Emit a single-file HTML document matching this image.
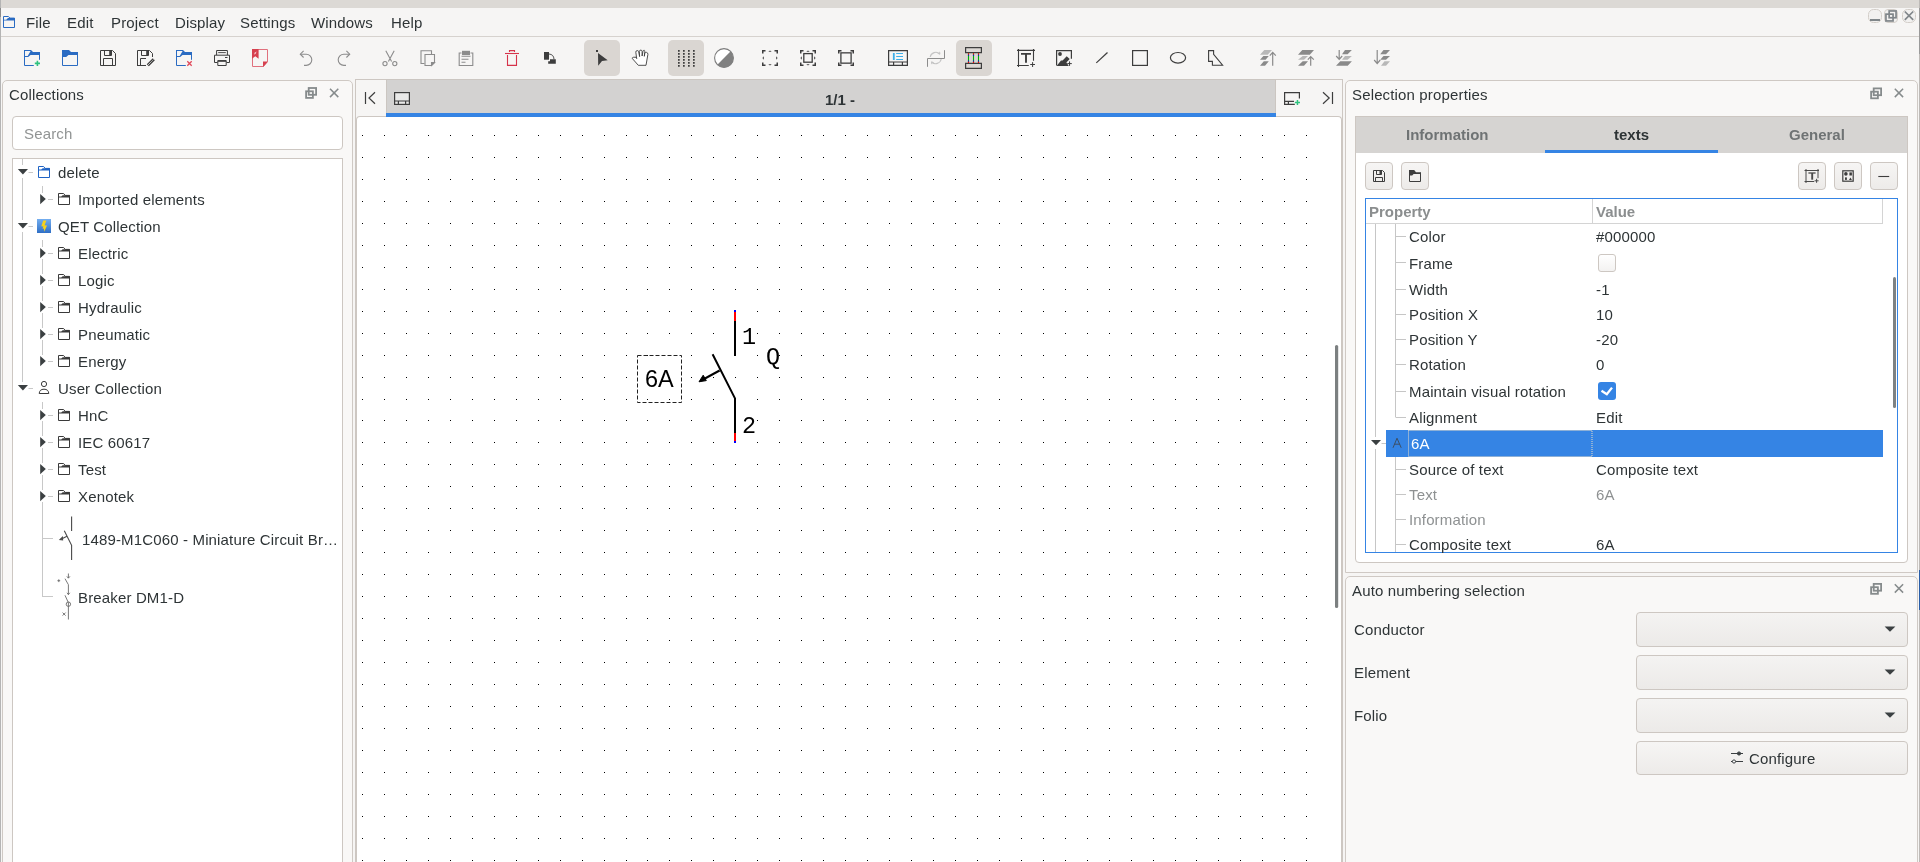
<!DOCTYPE html>
<html><head><meta charset="utf-8">
<style>
*{box-sizing:border-box;margin:0;padding:0}
html,body{width:1920px;height:862px;overflow:hidden}
body{position:relative;background:#f6f5f4;font-family:"Liberation Sans",sans-serif;font-size:15px;color:#2e3436}
.a{position:absolute}
.t{position:absolute;line-height:17px;white-space:nowrap;will-change:transform;letter-spacing:0.15px}
.b{font-weight:bold;letter-spacing:0}
svg{position:absolute;overflow:visible}
.dock{position:absolute;background:#f9f8f7;border:1px solid #cfc9c4;border-radius:5px 5px 0 0}
.btn{position:absolute;border:1px solid #cdc7c2;border-radius:4px;background:linear-gradient(#f6f5f4,#edebe9)}
.combo{position:absolute;border:1px solid #cdc7c2;border-radius:4px;background:linear-gradient(#f4f3f2,#eceae8)}
.gl{position:absolute;background:#c4c4c4}
.dis{color:#8e9192}
</style></head><body>
<!-- top strip -->
<div class="a" style="left:0;top:0;width:1920px;height:8px;background:#dcd9d5"></div>
<div class="a" style="left:0;top:36px;width:1920px;height:1px;background:#d6d2ce"></div>
<div class="a" style="left:0;top:0;width:1px;height:862px;background:#b4b4b4"></div><div class="a" style="left:0;top:8px;width:1px;height:9px;background:#8a8a8a"></div>
<div class="a" style="left:1919px;top:0;width:1px;height:862px;background:#bdbab7"></div><div class="a" style="left:1919px;top:8px;width:1px;height:46px;background:#9a9a9a"></div><div class="a" style="left:1919px;top:570px;width:1px;height:40px;background:#2a5ea8"></div>

<!-- MENU -->
<div id="menu">
<div class="t" style="left:26px;top:14px">File</div>
<div class="t" style="left:67px;top:14px">Edit</div>
<div class="t" style="left:111px;top:14px">Project</div>
<div class="t" style="left:175px;top:14px">Display</div>
<div class="t" style="left:240px;top:14px">Settings</div>
<div class="t" style="left:311px;top:14px">Windows</div>
<div class="t" style="left:391px;top:14px">Help</div>
</div>

<!-- TOOLBAR -->
<div id="toolbar">
<div class="a" style="left:584px;top:40px;width:36px;height:36px;border-radius:5px;background:#dad6d2"></div>
<div class="a" style="left:668px;top:40px;width:36px;height:36px;border-radius:5px;background:#dad6d2"></div>
<div class="a" style="left:956px;top:40px;width:36px;height:36px;border-radius:5px;background:#dad6d2"></div>
<svg style="left:0;top:0" width="1920" height="80" viewBox="0 0 1920 80">
<!-- menu app icon -->
<g transform="translate(3,16)" fill="none" stroke="#2a6bc2"><path d="M0.5 11.5V0.5H5.3L7 2.1H11.5V11.5Z"/><path d="M0 3.7H3.2L5 2.1H12V4.4H0Z" fill="#2a6bc2" stroke="none"/></g>
<!-- 1 new -->
<g transform="translate(24,50)">
<path fill="#2a6bc2" fill-rule="evenodd" d="M0 0H7L9 2H16V5.1H6.5L4.2 7H0Z M1 1V6H3.7L6.6 1Z"/>
<path fill="none" stroke="#2a6bc2" d="M0.5 6V15.5H9.8M15.5 5V9.8"/>
<path fill="none" stroke="#2ec27e" stroke-width="1.6" d="M10.8 13.4H16M13.4 10.8V16"/>
</g>
<!-- 2 open -->
<g transform="translate(62,50)">
<path fill="#2a6bc2" d="M0 0H7L9 2H16V5.1H6.5L4.2 7H0Z"/>
<path fill="none" stroke="#2a6bc2" d="M0.5 6V15.5H15.5V5"/>
</g>
<!-- 3 save -->
<g transform="translate(100,50)" fill="none" stroke="#3d3d3d">
<path d="M0.5 0.5H12.5L15.5 3.5V15.5H0.5Z"/>
<path d="M4.5 0.5V5.5H11.5V0.5"/>
<path d="M3.5 15.5V8.5H12.5V15.5"/>
<rect x="9.2" y="1" width="2" height="4.3" fill="#3d3d3d" stroke="none"/>
</g>
<!-- 4 save as -->
<g transform="translate(137,50)" fill="none" stroke="#3d3d3d">
<path d="M0.5 16V0.5H12.5L15.5 3.5V7M0 15.5H9"/>
<path d="M4.5 0.5V5.5H11.5V0.5"/>
<path d="M3.5 16V8.5H9"/>
<rect x="9.2" y="1" width="2" height="4.3" fill="#3d3d3d" stroke="none"/>
<path d="M10.8 15.2L16.8 9.2" stroke-width="3"/>
<path d="M11.1 14.9L16.5 9.5" stroke="#f6f5f4" stroke-width="1" stroke-dasharray="1 0.6"/>
</g>
<!-- 5 close -->
<g transform="translate(176,50)">
<path fill="#2a6bc2" fill-rule="evenodd" d="M0 0H7L9 2H16V5.1H6.5L4.2 7H0Z M1 1V6H3.7L6.6 1Z"/>
<path fill="none" stroke="#2a6bc2" d="M0.5 6V15.5H9.8M15.5 5V9.8"/>
<path fill="none" stroke="#e0485a" stroke-width="1.3" d="M11.3 11.3L15.7 15.7M15.7 11.3L11.3 15.7"/>
</g>
<!-- 6 print -->
<g transform="translate(214,50)" fill="none" stroke="#3d3d3d">
<path d="M2.6 5V0.5H13.4V5"/>
<path d="M4.2 2.6H11.8" stroke-width="0.9"/>
<path d="M3.5 12.5H0.5V5.2H15.5V12.5H12.5"/>
<path d="M11 7.5H13.5"/>
<path d="M3.8 10.6H12.2V15.5H3.8Z"/>
<rect x="3.8" y="10.3" width="8.4" height="1.5" fill="#3d3d3d" stroke="none"/>
</g>
<!-- 7 pdf -->
<g transform="translate(252,49)">
<path fill="none" stroke="#e0707d" d="M0.5 0.5H15.5V12.5L11.5 17.5H0.5Z"/>
<path fill="#d6404f" d="M11 12.5H16L11 18Z"/>
<path fill="#d6404f" d="M0 0H6.6V9.8L3.3 7.3L0 9.8Z"/>
<path fill="#f6c4ca" d="M2 5.5Q2.2 2.8 4.6 2.4Q4.2 5 2 5.5Z"/>
</g>
<!-- 8 undo -->
<g transform="translate(298,50)" fill="none" stroke="#8c8c8c" stroke-width="1.1">
<path d="M2.5 4.2H8.2A5.6 5.6 0 0 1 8.2 15.4H6"/>
<path d="M5.6 0.9L2.3 4.2L5.6 7.5"/>
</g>
<!-- 9 redo -->
<g transform="translate(336,50)" fill="none" stroke="#8c8c8c" stroke-width="1.1">
<path d="M13.5 4.2H7.8A5.6 5.6 0 0 0 7.8 15.4H10"/>
<path d="M10.4 0.9L13.7 4.2L10.4 7.5"/>
</g>
<!-- 10 cut -->
<g transform="translate(382,50)" fill="none" stroke="#8c8c8c" stroke-width="1.1">
<circle cx="3" cy="13.6" r="2.1"/>
<circle cx="12.8" cy="13.6" r="2.1"/>
<path d="M3.8 0.8L9.6 11.5M12.2 0.8L6.4 11.5"/>
</g>
<!-- 11 copy -->
<g transform="translate(420,50)" fill="none" stroke="#8c8c8c" stroke-width="1.1">
<path d="M4.5 13.5H1V0.8H11.5V4.5"/>
<path d="M5 4.5H14.5V12.5L11.5 15.5H5Z"/>
<path d="M11.5 15.5V12.5H14.5Z" fill="#8c8c8c"/>
</g>
<!-- 12 paste -->
<g transform="translate(458,50)" fill="none" stroke="#8c8c8c" stroke-width="1.1">
<path d="M3.5 3H1.2V15.5H14.8V3H12.5"/>
<rect x="4" y="0.8" width="8" height="4.2" fill="#8c8c8c" stroke="none"/>
<path d="M3.5 6.3H12.5M3.5 9.3H10.5M3.5 12.3H7.5"/>
</g>
<!-- 13 delete -->
<g transform="translate(504,50)" fill="none" stroke="#d6334a" stroke-width="1.1">
<path d="M5.5 2V0.6H10.5V2"/>
<path d="M1 3.5H15"/>
<path d="M3.5 5V15.4H12.5V5"/>
</g>
<!-- 14 orientation -->
<g transform="translate(542,50)">
<rect x="2" y="2" width="5" height="7.7" fill="#3d3d3d"/>
<path d="M8 9.2H13.8V13.7H6.2V11.2H8Z" fill="#3d3d3d"/>
<path d="M7 4A5.5 5.5 0 0 1 12 9.2" fill="none" stroke="#3d3d3d" stroke-width="0.9"/>
</g>
<!-- selected backgrounds drawn separately -->
<!-- 15 pointer -->
<g transform="translate(596,50)" fill="#3d3d3d">
<rect x="0" y="0" width="2" height="2"/>
<path d="M2 3L11.7 10.3L6 11L2.2 15.7Z"/>
</g>
<!-- 16 hand -->
<g transform="translate(632,50)">
<path fill="#fff" stroke="#3d3d3d" stroke-width="0.9" stroke-linejoin="round" d="M6.3 15.3L0.4 8.6Q0 7.6 1.2 7.3L4 7.2L4.7 8.6L3.8 2.2Q3.8 0.6 5.2 0.6Q6.5 0.6 6.7 1.6L7.6 6.6L7.3 1.4Q7.5 0.1 8.9 0.1Q10 0.2 10.1 1.4L10.1 6L11 1.2Q11.4 0.1 12.3 0.3Q12.9 0.6 12.8 1.8L12.3 6.3L12.8 3.2Q13.3 2.2 14.6 2.4Q16 2.8 15.9 4.4L14 15.3Z"/>
</g>
<!-- 17 grid -->
<g transform="translate(678,50)" fill="#3d3d3d">
<path d="M0 0h1.7v1.7h-1.7zM5 0h1.7v1.7h-1.7zM10 0h1.7v1.7h-1.7zM15 0h1.7v1.7h-1.7z
M0 3h1.7v1.7h-1.7zM5 3h1.7v1.7h-1.7zM10 3h1.7v1.7h-1.7zM15 3h1.7v1.7h-1.7z
M0 6h1.7v1.7h-1.7zM5 6h1.7v1.7h-1.7zM10 6h1.7v1.7h-1.7zM15 6h1.7v1.7h-1.7z
M0 9h1.7v1.7h-1.7zM5 9h1.7v1.7h-1.7zM10 9h1.7v1.7h-1.7zM15 9h1.7v1.7h-1.7z
M0 12h1.7v1.7h-1.7zM5 12h1.7v1.7h-1.7zM10 12h1.7v1.7h-1.7zM15 12h1.7v1.7h-1.7z
M0 15h1.7v1.7h-1.7zM5 15h1.7v1.7h-1.7zM10 15h1.7v1.7h-1.7zM15 15h1.7v1.7h-1.7z"/>
</g>
<!-- 18 contrast -->
<g transform="translate(714,48)">
<circle cx="10" cy="10" r="9.4" fill="#fff" stroke="#7c7c7c" stroke-width="1.1"/>
<path d="M16.65 3.35A9.4 9.4 0 0 1 3.35 16.65Z" fill="#808080"/>
</g>
<!-- 19 zoom in -->
<g transform="translate(762,50)" fill="none" stroke="#3d3d3d" stroke-width="1.5">
<path d="M0.75 3.5V0.75H3.5M12.5 0.75H15.25V3.5M0.75 12.5V15.25H3.5M12.5 15.25H15.25V12.5"/>
<path d="M6.3 1.8L8 0.4L9.7 1.8Z M6.3 14.2L8 15.6L9.7 14.2Z M1.8 6.3L0.4 8L1.8 9.7Z M14.2 6.3L15.6 8L14.2 9.7Z" fill="#3d3d3d" stroke="none"/>
</g>
<!-- 20 zoom fit -->
<g transform="translate(800,50)" fill="none" stroke="#3d3d3d" stroke-width="1.5">
<path d="M0.75 3.5V0.75H3.5M12.5 0.75H15.25V3.5M0.75 12.5V15.25H3.5M12.5 15.25H15.25V12.5"/>
<path d="M6.3 1.8L8 0.4L9.7 1.8Z M6.3 14.2L8 15.6L9.7 14.2Z M1.8 6.3L0.4 8L1.8 9.7Z M14.2 6.3L15.6 8L14.2 9.7Z" fill="#3d3d3d" stroke="none"/>
<rect x="3.8" y="3.6" width="8.4" height="8.6" stroke-width="1.3"/>
</g>
<!-- 21 zoom reset -->
<g transform="translate(838,50)" fill="none" stroke="#3d3d3d" stroke-width="1.5">
<path d="M0.75 3.5V0.75H3.5M12.5 0.75H15.25V3.5M0.75 12.5V15.25H3.5M12.5 15.25H15.25V12.5"/>
<rect x="2.9" y="2.85" width="10.2" height="10.3" stroke-width="1.3"/>
</g>
<!-- 22 folio props -->
<g transform="translate(888,50)">
<path d="M0.6 0.6H19.4V15.4H0.6Z M0.6 12H19.4 M5.6 12V15.4 M14.4 12V15.4" fill="none" stroke="#3d3d3d" stroke-width="1.2"/>
<rect x="4.9" y="3" width="1.8" height="7" fill="#3daee9"/>
<path d="M8.2 3.5H15M8.2 6.5H15M8.2 9.5H15" stroke="#3daee9" stroke-width="1"/>
</g>
<!-- 23 auto conductor (disabled) -->
<g transform="translate(927,50)" fill="none">
<path d="M3.2 7A5.7 5.7 0 0 1 12.8 4M14.2 9A5.7 5.7 0 0 1 4.6 12" stroke="#c4c4c4" stroke-width="1.1"/>
<path d="M10.6 3.2L12.9 4.2L12.6 1.8M6.8 12.8L4.5 11.8L4.8 14.2" stroke="#c4c4c4" stroke-width="1"/>
<path d="M0.5 16.8V8.5H17.5V0.2" stroke="#8c8c8c" stroke-width="1"/>
</g>
<!-- 24 terminal -->
<g transform="translate(965,47)">
<path d="M0.6 0.6H16.4V5.6H0.6Z M0.6 16.4H16.4V21.4H0.6Z" fill="#dcd8d4" stroke="#3d3d3d" stroke-width="1.2"/>
<path d="M3.5 6.2V16 M8.5 6.2V16 M13.5 6.2V16" stroke="#00b000" stroke-width="1.1"/>
<path d="M3.5 6.2V7.8M8.5 6.2V7.8M13.5 6.2V7.8M3.5 14.4V16M8.5 14.4V16M13.5 14.4V16" stroke="#ff0000" stroke-width="1.1"/>
<path d="M3.5 7.8V8.8M8.5 7.8V8.8M13.5 7.8V8.8M3.5 13.4V14.4M8.5 13.4V14.4M13.5 13.4V14.4" stroke="#0000ff" stroke-width="1.1"/>
</g>
<!-- 25 text -->
<g transform="translate(1017,49)" fill="none" stroke="#3d3d3d">
<path d="M0 1.4H18M1.5 0V18M16.5 0V11.7M0 16.5H11.8" stroke-width="1.1"/>
<path d="M4 4.9H14M9 5V13.8" stroke-width="1.9"/>
<path d="M13.2 15.5H18M15.6 13.1V18" stroke-width="1"/>
</g>
<!-- 26 image -->
<g transform="translate(1056,50)">
<path d="M0.6 15.5V0.6H15.4V8.7" fill="none" stroke="#3d3d3d" stroke-width="1.2"/>
<circle cx="4" cy="4" r="1.9" fill="#3d3d3d"/>
<path d="M0.6 15.9L5 10.4H6.6L10.7 6.3L13.7 9L10.4 12.6L12.8 15.9Z" fill="#3d3d3d"/>
<path d="M11.3 13.6H15.8M13.55 11.4V15.9" stroke="#3d3d3d" stroke-width="1"/>
</g>
<!-- 27 line -->
<path d="M1096.3 62.9L1107.5 52.5" stroke="#3d3d3d" stroke-width="1.2"/>
<!-- 28 rect -->
<rect x="1132.6" y="50.6" width="14.8" height="14.8" fill="none" stroke="#3d3d3d" stroke-width="1.2"/>
<!-- 29 ellipse -->
<ellipse cx="1178" cy="57.8" rx="7.6" ry="5.3" fill="none" stroke="#3d3d3d" stroke-width="1.2"/>
<!-- 30 polygon -->
<path d="M1208.6 50.6H1213.6V54.3L1222.6 65.2H1212.4V61.4H1208.6Z" fill="none" stroke="#3d3d3d" stroke-width="1.1"/>
<!-- 31 raise to top -->
<g transform="translate(1260,50)">
<path d="M4.3 0H12L7.7 4.7H0Z" fill="#b8b8b8"/>
<path d="M3.4 6H8.8L5.6 9.8H0Z M3.8 11.2H8.8L5 15.7H0Z" fill="#8a8a8a"/>
<path d="M12.7 2.2V15.7M9.8 5.6L12.7 2.4L15.8 5.6" fill="none" stroke="#8a8a8a" stroke-width="1.2"/>
</g>
<!-- 32 raise -->
<g transform="translate(1298,50)">
<path d="M4.3 0H16L11.8 4.7H0Z M4.7 11.2H10L6 15.7H0Z" fill="#8a8a8a"/>
<path d="M4.7 6H10L6 9.8H0Z" fill="#b8b8b8"/>
<path d="M12.7 6.5V15.7M9.8 9.7L12.7 6.6L15.8 9.7" fill="none" stroke="#8a8a8a" stroke-width="1.2"/>
</g>
<!-- 33 lower -->
<g transform="translate(1336,50)">
<path d="M9 0H15.9L11.6 4.2H6Z M4.3 11.2H15.9L11.7 15.7H0Z" fill="#8a8a8a"/>
<path d="M9 6H15.9L11.6 9.8H6Z" fill="#b8b8b8"/>
<path d="M3.2 0V9.5M0.2 6L3.2 9.4L6.2 6" fill="none" stroke="#8a8a8a" stroke-width="1.2"/>
</g>
<!-- 34 lower to bottom -->
<g transform="translate(1374,50)">
<path d="M9.5 0H16L12 4.2H6.2Z M9.5 6H16L12 9.8H6.2Z" fill="#8a8a8a"/>
<path d="M10.5 11.2H16L12 15.7H7Z" fill="#b8b8b8"/>
<path d="M3.2 0V13.5M0.2 10L3.2 13.6L6.2 10" fill="none" stroke="#8a8a8a" stroke-width="1.2"/>
</g>
<!-- window controls -->
<rect x="1868.5" y="9.5" width="13" height="13" rx="5" fill="#f2f1f0" stroke="#d3cec9"/>
<rect x="1870" y="19" width="10" height="2" fill="#80868a"/>
<rect x="1884.5" y="9.5" width="13" height="13" rx="3.5" fill="#f2f1f0" stroke="#d3cec9"/><rect x="1889.15" y="10.95" width="6.9" height="6.8" fill="none" stroke="#80868a" stroke-width="1.7"/><rect x="1885.95" y="14.15" width="7.1" height="6.8" fill="none" stroke="#80868a" stroke-width="1.7"/><rect x="1902.5" y="9.5" width="13" height="13" rx="5" fill="#f2f1f0" stroke="#d3cec9"/>
<path d="M1904.8 11.5L1913.2 19.9M1913.2 11.5L1904.8 19.9" stroke="#80868a" stroke-width="1.7"/>
</svg>

</div>

<!-- LEFT DOCK -->
<div class="dock" style="left:2px;top:80px;width:351px;height:800px"></div>
<div class="t" style="left:9px;top:86px">Collections</div>
<div class="a" style="left:12px;top:116px;width:331px;height:34px;border:1px solid #cdc7c2;border-radius:4px;background:#fff"></div>
<div class="t" style="left:24px;top:125px;color:#919494">Search</div>
<div class="a" style="left:12px;top:158px;width:331px;height:720px;border:1px solid #cdc7c2;background:#fff"></div>
<svg style="left:0;top:0" width="360" height="862" viewBox="0 0 360 862"><path d="M22.5 159V165M22.5 178V220M22.5 232V382" stroke="#c8c8c8"/><path d="M42.5 186V193 M42.5 240V247 M42.5 259V274 M42.5 286V301 M42.5 313V328 M42.5 340V355 M42.5 402V409 M42.5 421V436 M42.5 448V463 M42.5 475V490 M42.5 502V597" stroke="#c8c8c8"/><path d="M17.8 169H28L22.9 174.4Z" fill="#3b4042"/><path d="M28.5 172.5H33" stroke="#c8c8c8"/><g transform="translate(38,166)" fill="none" stroke="#1f63c4"><path d="M0.5 11.5V0.5H5.6L7.2 2.4H11.5V11.5Z"/><path d="M0 3.6H3.2L4.7 2.2H12V4.5H0Z" fill="#1f63c4" stroke="none"/></g><path d="M40.2 194V204.2L45.8 199.1Z" fill="#3b4042"/><path d="M48 199.5H53" stroke="#c8c8c8"/><g transform="translate(58,193)" fill="none" stroke="#3a3a3a"><path d="M0.5 11.5V0.5H5.6L7.2 2.4H11.5V11.5Z"/><path d="M0 3.6H3.2L4.7 2.2H12V4.5H0Z" fill="#3a3a3a" stroke="none"/></g><path d="M17.8 223H28L22.9 228.4Z" fill="#3b4042"/><path d="M28.5 226.5H33" stroke="#c8c8c8"/><defs><linearGradient id="qg" x1="0" y1="0" x2="0" y2="1"><stop offset="0" stop-color="#74aef0"/><stop offset="1" stop-color="#2f6fc6"/></linearGradient></defs><g transform="translate(37,219)"><rect width="14" height="14" fill="url(#qg)"/><path d="M6.2 1.6H9.4L7.6 6.2L10 6.4L7.2 12.8L6.9 9.6L5.5 9.8L6.4 7.4L4.3 7.2Z" fill="#f7d21c"/></g><path d="M40.2 248V258.2L45.8 253.1Z" fill="#3b4042"/><path d="M48 253.5H53" stroke="#c8c8c8"/><g transform="translate(58,247)" fill="none" stroke="#3a3a3a"><path d="M0.5 11.5V0.5H5.6L7.2 2.4H11.5V11.5Z"/><path d="M0 3.6H3.2L4.7 2.2H12V4.5H0Z" fill="#3a3a3a" stroke="none"/></g><path d="M40.2 275V285.2L45.8 280.1Z" fill="#3b4042"/><path d="M48 280.5H53" stroke="#c8c8c8"/><g transform="translate(58,274)" fill="none" stroke="#3a3a3a"><path d="M0.5 11.5V0.5H5.6L7.2 2.4H11.5V11.5Z"/><path d="M0 3.6H3.2L4.7 2.2H12V4.5H0Z" fill="#3a3a3a" stroke="none"/></g><path d="M40.2 302V312.2L45.8 307.1Z" fill="#3b4042"/><path d="M48 307.5H53" stroke="#c8c8c8"/><g transform="translate(58,301)" fill="none" stroke="#3a3a3a"><path d="M0.5 11.5V0.5H5.6L7.2 2.4H11.5V11.5Z"/><path d="M0 3.6H3.2L4.7 2.2H12V4.5H0Z" fill="#3a3a3a" stroke="none"/></g><path d="M40.2 329V339.2L45.8 334.1Z" fill="#3b4042"/><path d="M48 334.5H53" stroke="#c8c8c8"/><g transform="translate(58,328)" fill="none" stroke="#3a3a3a"><path d="M0.5 11.5V0.5H5.6L7.2 2.4H11.5V11.5Z"/><path d="M0 3.6H3.2L4.7 2.2H12V4.5H0Z" fill="#3a3a3a" stroke="none"/></g><path d="M40.2 356V366.2L45.8 361.1Z" fill="#3b4042"/><path d="M48 361.5H53" stroke="#c8c8c8"/><g transform="translate(58,355)" fill="none" stroke="#3a3a3a"><path d="M0.5 11.5V0.5H5.6L7.2 2.4H11.5V11.5Z"/><path d="M0 3.6H3.2L4.7 2.2H12V4.5H0Z" fill="#3a3a3a" stroke="none"/></g><path d="M17.8 385H28L22.9 390.4Z" fill="#3b4042"/><path d="M28.5 388.5H33" stroke="#c8c8c8"/><g transform="translate(38,381)" fill="none" stroke="#3a3a3a"><circle cx="6" cy="3" r="2.6"/><path d="M1.2 12.5H10.8Q10.5 8.2 6 8.2Q1.5 8.2 1.2 12.5Z"/></g><path d="M40.2 410V420.2L45.8 415.1Z" fill="#3b4042"/><path d="M48 415.5H53" stroke="#c8c8c8"/><g transform="translate(58,409)" fill="none" stroke="#3a3a3a"><path d="M0.5 11.5V0.5H5.6L7.2 2.4H11.5V11.5Z"/><path d="M0 3.6H3.2L4.7 2.2H12V4.5H0Z" fill="#3a3a3a" stroke="none"/></g><path d="M40.2 437V447.2L45.8 442.1Z" fill="#3b4042"/><path d="M48 442.5H53" stroke="#c8c8c8"/><g transform="translate(58,436)" fill="none" stroke="#3a3a3a"><path d="M0.5 11.5V0.5H5.6L7.2 2.4H11.5V11.5Z"/><path d="M0 3.6H3.2L4.7 2.2H12V4.5H0Z" fill="#3a3a3a" stroke="none"/></g><path d="M40.2 464V474.2L45.8 469.1Z" fill="#3b4042"/><path d="M48 469.5H53" stroke="#c8c8c8"/><g transform="translate(58,463)" fill="none" stroke="#3a3a3a"><path d="M0.5 11.5V0.5H5.6L7.2 2.4H11.5V11.5Z"/><path d="M0 3.6H3.2L4.7 2.2H12V4.5H0Z" fill="#3a3a3a" stroke="none"/></g><path d="M40.2 491V501.2L45.8 496.1Z" fill="#3b4042"/><path d="M48 496.5H53" stroke="#c8c8c8"/><g transform="translate(58,490)" fill="none" stroke="#3a3a3a"><path d="M0.5 11.5V0.5H5.6L7.2 2.4H11.5V11.5Z"/><path d="M0 3.6H3.2L4.7 2.2H12V4.5H0Z" fill="#3a3a3a" stroke="none"/></g><path d="M42 538.5H53M42 596.5H53" stroke="#c8c8c8"/><g fill="none" stroke="#4a4a4a" stroke-width="1.1"><path d="M71.6 516.5V531M64.3 530.8L71.6 545.3V560M67 536.2L61.5 539"/><path d="M60 539.6L62.4 537.2L62.6 539.8Z" fill="#4a4a4a"/></g><g fill="none" stroke="#6a6a6a" stroke-width="0.9"><path d="M68.4 573.5V578M65 578.7L68.4 584.7M68.4 584.7V594.7M65 595.3L68.4 602.7V619.5M66.9 576.4L68.4 578.2L69.9 576.4M67 592.8L68.4 594.6L69.8 592.8"/><circle cx="68.4" cy="604.2" r="2.2"/><path d="M62.6 612.6L65.6 615.6M65.6 612.6L62.6 615.6M57.4 580.7H60.2M58.8 579.3V582.1"/></g></svg><div class="t" style="left:58px;top:164px">delete</div><div class="t" style="left:78px;top:191px">Imported elements</div><div class="t" style="left:58px;top:218px">QET Collection</div><div class="t" style="left:78px;top:245px">Electric</div><div class="t" style="left:78px;top:272px">Logic</div><div class="t" style="left:78px;top:299px">Hydraulic</div><div class="t" style="left:78px;top:326px">Pneumatic</div><div class="t" style="left:78px;top:353px">Energy</div><div class="t" style="left:58px;top:380px">User Collection</div><div class="t" style="left:78px;top:407px">HnC</div><div class="t" style="left:78px;top:434px">IEC 60617</div><div class="t" style="left:78px;top:461px">Test</div><div class="t" style="left:78px;top:488px">Xenotek</div><div class="t" style="left:82px;top:531px">1489-M1C060 - Miniature Circuit Br…</div><div class="t" style="left:78px;top:589px">Breaker DM1-D</div>

<!-- CENTRAL -->
<div class="a" style="left:355px;top:79px;width:988px;height:800px;border:1px solid #cdc7c2;background:#f6f5f4"></div>
<div class="a" style="left:386px;top:79px;width:890px;height:38px;background:#d3d2d1;border:1px solid #cbc6c1;border-bottom:none"></div>
<div class="a" style="left:356px;top:116px;width:986px;height:746px;background:#fff;border-radius:4px 4px 0 0;border-top:1px solid #cdc7c2;border-left:1px solid #cdc7c2;border-right:1px solid #cdc7c2"></div>
<div class="a" style="left:386px;top:113px;width:890px;height:4px;background:#3584e4"></div>

<svg style="left:0;top:0" width="1920" height="862" viewBox="0 0 1920 862">
<path d="M362 135h1v1h-1zM384 135h1v1h-1zM406 135h1v1h-1zM428 135h1v1h-1zM450 135h1v1h-1zM472 135h1v1h-1zM494 135h1v1h-1zM516 135h1v1h-1zM538 135h1v1h-1zM560 135h1v1h-1zM582 135h1v1h-1zM604 135h1v1h-1zM626 135h1v1h-1zM647 135h1v1h-1zM669 135h1v1h-1zM691 135h1v1h-1zM713 135h1v1h-1zM735 135h1v1h-1zM757 135h1v1h-1zM779 135h1v1h-1zM801 135h1v1h-1zM823 135h1v1h-1zM845 135h1v1h-1zM867 135h1v1h-1zM889 135h1v1h-1zM911 135h1v1h-1zM933 135h1v1h-1zM955 135h1v1h-1zM977 135h1v1h-1zM999 135h1v1h-1zM1021 135h1v1h-1zM1043 135h1v1h-1zM1065 135h1v1h-1zM1087 135h1v1h-1zM1109 135h1v1h-1zM1131 135h1v1h-1zM1153 135h1v1h-1zM1175 135h1v1h-1zM1196 135h1v1h-1zM1218 135h1v1h-1zM1240 135h1v1h-1zM1262 135h1v1h-1zM1284 135h1v1h-1zM1306 135h1v1h-1zM362 157h1v1h-1zM384 157h1v1h-1zM406 157h1v1h-1zM428 157h1v1h-1zM450 157h1v1h-1zM472 157h1v1h-1zM494 157h1v1h-1zM516 157h1v1h-1zM538 157h1v1h-1zM560 157h1v1h-1zM582 157h1v1h-1zM604 157h1v1h-1zM626 157h1v1h-1zM647 157h1v1h-1zM669 157h1v1h-1zM691 157h1v1h-1zM713 157h1v1h-1zM735 157h1v1h-1zM757 157h1v1h-1zM779 157h1v1h-1zM801 157h1v1h-1zM823 157h1v1h-1zM845 157h1v1h-1zM867 157h1v1h-1zM889 157h1v1h-1zM911 157h1v1h-1zM933 157h1v1h-1zM955 157h1v1h-1zM977 157h1v1h-1zM999 157h1v1h-1zM1021 157h1v1h-1zM1043 157h1v1h-1zM1065 157h1v1h-1zM1087 157h1v1h-1zM1109 157h1v1h-1zM1131 157h1v1h-1zM1153 157h1v1h-1zM1175 157h1v1h-1zM1196 157h1v1h-1zM1218 157h1v1h-1zM1240 157h1v1h-1zM1262 157h1v1h-1zM1284 157h1v1h-1zM1306 157h1v1h-1zM362 179h1v1h-1zM384 179h1v1h-1zM406 179h1v1h-1zM428 179h1v1h-1zM450 179h1v1h-1zM472 179h1v1h-1zM494 179h1v1h-1zM516 179h1v1h-1zM538 179h1v1h-1zM560 179h1v1h-1zM582 179h1v1h-1zM604 179h1v1h-1zM626 179h1v1h-1zM647 179h1v1h-1zM669 179h1v1h-1zM691 179h1v1h-1zM713 179h1v1h-1zM735 179h1v1h-1zM757 179h1v1h-1zM779 179h1v1h-1zM801 179h1v1h-1zM823 179h1v1h-1zM845 179h1v1h-1zM867 179h1v1h-1zM889 179h1v1h-1zM911 179h1v1h-1zM933 179h1v1h-1zM955 179h1v1h-1zM977 179h1v1h-1zM999 179h1v1h-1zM1021 179h1v1h-1zM1043 179h1v1h-1zM1065 179h1v1h-1zM1087 179h1v1h-1zM1109 179h1v1h-1zM1131 179h1v1h-1zM1153 179h1v1h-1zM1175 179h1v1h-1zM1196 179h1v1h-1zM1218 179h1v1h-1zM1240 179h1v1h-1zM1262 179h1v1h-1zM1284 179h1v1h-1zM1306 179h1v1h-1zM362 201h1v1h-1zM384 201h1v1h-1zM406 201h1v1h-1zM428 201h1v1h-1zM450 201h1v1h-1zM472 201h1v1h-1zM494 201h1v1h-1zM516 201h1v1h-1zM538 201h1v1h-1zM560 201h1v1h-1zM582 201h1v1h-1zM604 201h1v1h-1zM626 201h1v1h-1zM647 201h1v1h-1zM669 201h1v1h-1zM691 201h1v1h-1zM713 201h1v1h-1zM735 201h1v1h-1zM757 201h1v1h-1zM779 201h1v1h-1zM801 201h1v1h-1zM823 201h1v1h-1zM845 201h1v1h-1zM867 201h1v1h-1zM889 201h1v1h-1zM911 201h1v1h-1zM933 201h1v1h-1zM955 201h1v1h-1zM977 201h1v1h-1zM999 201h1v1h-1zM1021 201h1v1h-1zM1043 201h1v1h-1zM1065 201h1v1h-1zM1087 201h1v1h-1zM1109 201h1v1h-1zM1131 201h1v1h-1zM1153 201h1v1h-1zM1175 201h1v1h-1zM1196 201h1v1h-1zM1218 201h1v1h-1zM1240 201h1v1h-1zM1262 201h1v1h-1zM1284 201h1v1h-1zM1306 201h1v1h-1zM362 223h1v1h-1zM384 223h1v1h-1zM406 223h1v1h-1zM428 223h1v1h-1zM450 223h1v1h-1zM472 223h1v1h-1zM494 223h1v1h-1zM516 223h1v1h-1zM538 223h1v1h-1zM560 223h1v1h-1zM582 223h1v1h-1zM604 223h1v1h-1zM626 223h1v1h-1zM647 223h1v1h-1zM669 223h1v1h-1zM691 223h1v1h-1zM713 223h1v1h-1zM735 223h1v1h-1zM757 223h1v1h-1zM779 223h1v1h-1zM801 223h1v1h-1zM823 223h1v1h-1zM845 223h1v1h-1zM867 223h1v1h-1zM889 223h1v1h-1zM911 223h1v1h-1zM933 223h1v1h-1zM955 223h1v1h-1zM977 223h1v1h-1zM999 223h1v1h-1zM1021 223h1v1h-1zM1043 223h1v1h-1zM1065 223h1v1h-1zM1087 223h1v1h-1zM1109 223h1v1h-1zM1131 223h1v1h-1zM1153 223h1v1h-1zM1175 223h1v1h-1zM1196 223h1v1h-1zM1218 223h1v1h-1zM1240 223h1v1h-1zM1262 223h1v1h-1zM1284 223h1v1h-1zM1306 223h1v1h-1zM362 245h1v1h-1zM384 245h1v1h-1zM406 245h1v1h-1zM428 245h1v1h-1zM450 245h1v1h-1zM472 245h1v1h-1zM494 245h1v1h-1zM516 245h1v1h-1zM538 245h1v1h-1zM560 245h1v1h-1zM582 245h1v1h-1zM604 245h1v1h-1zM626 245h1v1h-1zM647 245h1v1h-1zM669 245h1v1h-1zM691 245h1v1h-1zM713 245h1v1h-1zM735 245h1v1h-1zM757 245h1v1h-1zM779 245h1v1h-1zM801 245h1v1h-1zM823 245h1v1h-1zM845 245h1v1h-1zM867 245h1v1h-1zM889 245h1v1h-1zM911 245h1v1h-1zM933 245h1v1h-1zM955 245h1v1h-1zM977 245h1v1h-1zM999 245h1v1h-1zM1021 245h1v1h-1zM1043 245h1v1h-1zM1065 245h1v1h-1zM1087 245h1v1h-1zM1109 245h1v1h-1zM1131 245h1v1h-1zM1153 245h1v1h-1zM1175 245h1v1h-1zM1196 245h1v1h-1zM1218 245h1v1h-1zM1240 245h1v1h-1zM1262 245h1v1h-1zM1284 245h1v1h-1zM1306 245h1v1h-1zM362 267h1v1h-1zM384 267h1v1h-1zM406 267h1v1h-1zM428 267h1v1h-1zM450 267h1v1h-1zM472 267h1v1h-1zM494 267h1v1h-1zM516 267h1v1h-1zM538 267h1v1h-1zM560 267h1v1h-1zM582 267h1v1h-1zM604 267h1v1h-1zM626 267h1v1h-1zM647 267h1v1h-1zM669 267h1v1h-1zM691 267h1v1h-1zM713 267h1v1h-1zM735 267h1v1h-1zM757 267h1v1h-1zM779 267h1v1h-1zM801 267h1v1h-1zM823 267h1v1h-1zM845 267h1v1h-1zM867 267h1v1h-1zM889 267h1v1h-1zM911 267h1v1h-1zM933 267h1v1h-1zM955 267h1v1h-1zM977 267h1v1h-1zM999 267h1v1h-1zM1021 267h1v1h-1zM1043 267h1v1h-1zM1065 267h1v1h-1zM1087 267h1v1h-1zM1109 267h1v1h-1zM1131 267h1v1h-1zM1153 267h1v1h-1zM1175 267h1v1h-1zM1196 267h1v1h-1zM1218 267h1v1h-1zM1240 267h1v1h-1zM1262 267h1v1h-1zM1284 267h1v1h-1zM1306 267h1v1h-1zM362 289h1v1h-1zM384 289h1v1h-1zM406 289h1v1h-1zM428 289h1v1h-1zM450 289h1v1h-1zM472 289h1v1h-1zM494 289h1v1h-1zM516 289h1v1h-1zM538 289h1v1h-1zM560 289h1v1h-1zM582 289h1v1h-1zM604 289h1v1h-1zM626 289h1v1h-1zM647 289h1v1h-1zM669 289h1v1h-1zM691 289h1v1h-1zM713 289h1v1h-1zM735 289h1v1h-1zM757 289h1v1h-1zM779 289h1v1h-1zM801 289h1v1h-1zM823 289h1v1h-1zM845 289h1v1h-1zM867 289h1v1h-1zM889 289h1v1h-1zM911 289h1v1h-1zM933 289h1v1h-1zM955 289h1v1h-1zM977 289h1v1h-1zM999 289h1v1h-1zM1021 289h1v1h-1zM1043 289h1v1h-1zM1065 289h1v1h-1zM1087 289h1v1h-1zM1109 289h1v1h-1zM1131 289h1v1h-1zM1153 289h1v1h-1zM1175 289h1v1h-1zM1196 289h1v1h-1zM1218 289h1v1h-1zM1240 289h1v1h-1zM1262 289h1v1h-1zM1284 289h1v1h-1zM1306 289h1v1h-1zM362 311h1v1h-1zM384 311h1v1h-1zM406 311h1v1h-1zM428 311h1v1h-1zM450 311h1v1h-1zM472 311h1v1h-1zM494 311h1v1h-1zM516 311h1v1h-1zM538 311h1v1h-1zM560 311h1v1h-1zM582 311h1v1h-1zM604 311h1v1h-1zM626 311h1v1h-1zM647 311h1v1h-1zM669 311h1v1h-1zM691 311h1v1h-1zM713 311h1v1h-1zM735 311h1v1h-1zM757 311h1v1h-1zM779 311h1v1h-1zM801 311h1v1h-1zM823 311h1v1h-1zM845 311h1v1h-1zM867 311h1v1h-1zM889 311h1v1h-1zM911 311h1v1h-1zM933 311h1v1h-1zM955 311h1v1h-1zM977 311h1v1h-1zM999 311h1v1h-1zM1021 311h1v1h-1zM1043 311h1v1h-1zM1065 311h1v1h-1zM1087 311h1v1h-1zM1109 311h1v1h-1zM1131 311h1v1h-1zM1153 311h1v1h-1zM1175 311h1v1h-1zM1196 311h1v1h-1zM1218 311h1v1h-1zM1240 311h1v1h-1zM1262 311h1v1h-1zM1284 311h1v1h-1zM1306 311h1v1h-1zM362 333h1v1h-1zM384 333h1v1h-1zM406 333h1v1h-1zM428 333h1v1h-1zM450 333h1v1h-1zM472 333h1v1h-1zM494 333h1v1h-1zM516 333h1v1h-1zM538 333h1v1h-1zM560 333h1v1h-1zM582 333h1v1h-1zM604 333h1v1h-1zM626 333h1v1h-1zM647 333h1v1h-1zM669 333h1v1h-1zM691 333h1v1h-1zM713 333h1v1h-1zM735 333h1v1h-1zM757 333h1v1h-1zM779 333h1v1h-1zM801 333h1v1h-1zM823 333h1v1h-1zM845 333h1v1h-1zM867 333h1v1h-1zM889 333h1v1h-1zM911 333h1v1h-1zM933 333h1v1h-1zM955 333h1v1h-1zM977 333h1v1h-1zM999 333h1v1h-1zM1021 333h1v1h-1zM1043 333h1v1h-1zM1065 333h1v1h-1zM1087 333h1v1h-1zM1109 333h1v1h-1zM1131 333h1v1h-1zM1153 333h1v1h-1zM1175 333h1v1h-1zM1196 333h1v1h-1zM1218 333h1v1h-1zM1240 333h1v1h-1zM1262 333h1v1h-1zM1284 333h1v1h-1zM1306 333h1v1h-1zM362 355h1v1h-1zM384 355h1v1h-1zM406 355h1v1h-1zM428 355h1v1h-1zM450 355h1v1h-1zM472 355h1v1h-1zM494 355h1v1h-1zM516 355h1v1h-1zM538 355h1v1h-1zM560 355h1v1h-1zM582 355h1v1h-1zM604 355h1v1h-1zM626 355h1v1h-1zM647 355h1v1h-1zM669 355h1v1h-1zM691 355h1v1h-1zM713 355h1v1h-1zM735 355h1v1h-1zM757 355h1v1h-1zM779 355h1v1h-1zM801 355h1v1h-1zM823 355h1v1h-1zM845 355h1v1h-1zM867 355h1v1h-1zM889 355h1v1h-1zM911 355h1v1h-1zM933 355h1v1h-1zM955 355h1v1h-1zM977 355h1v1h-1zM999 355h1v1h-1zM1021 355h1v1h-1zM1043 355h1v1h-1zM1065 355h1v1h-1zM1087 355h1v1h-1zM1109 355h1v1h-1zM1131 355h1v1h-1zM1153 355h1v1h-1zM1175 355h1v1h-1zM1196 355h1v1h-1zM1218 355h1v1h-1zM1240 355h1v1h-1zM1262 355h1v1h-1zM1284 355h1v1h-1zM1306 355h1v1h-1zM362 377h1v1h-1zM384 377h1v1h-1zM406 377h1v1h-1zM428 377h1v1h-1zM450 377h1v1h-1zM472 377h1v1h-1zM494 377h1v1h-1zM516 377h1v1h-1zM538 377h1v1h-1zM560 377h1v1h-1zM582 377h1v1h-1zM604 377h1v1h-1zM626 377h1v1h-1zM647 377h1v1h-1zM669 377h1v1h-1zM691 377h1v1h-1zM713 377h1v1h-1zM735 377h1v1h-1zM757 377h1v1h-1zM779 377h1v1h-1zM801 377h1v1h-1zM823 377h1v1h-1zM845 377h1v1h-1zM867 377h1v1h-1zM889 377h1v1h-1zM911 377h1v1h-1zM933 377h1v1h-1zM955 377h1v1h-1zM977 377h1v1h-1zM999 377h1v1h-1zM1021 377h1v1h-1zM1043 377h1v1h-1zM1065 377h1v1h-1zM1087 377h1v1h-1zM1109 377h1v1h-1zM1131 377h1v1h-1zM1153 377h1v1h-1zM1175 377h1v1h-1zM1196 377h1v1h-1zM1218 377h1v1h-1zM1240 377h1v1h-1zM1262 377h1v1h-1zM1284 377h1v1h-1zM1306 377h1v1h-1zM362 399h1v1h-1zM384 399h1v1h-1zM406 399h1v1h-1zM428 399h1v1h-1zM450 399h1v1h-1zM472 399h1v1h-1zM494 399h1v1h-1zM516 399h1v1h-1zM538 399h1v1h-1zM560 399h1v1h-1zM582 399h1v1h-1zM604 399h1v1h-1zM626 399h1v1h-1zM647 399h1v1h-1zM669 399h1v1h-1zM691 399h1v1h-1zM713 399h1v1h-1zM735 399h1v1h-1zM757 399h1v1h-1zM779 399h1v1h-1zM801 399h1v1h-1zM823 399h1v1h-1zM845 399h1v1h-1zM867 399h1v1h-1zM889 399h1v1h-1zM911 399h1v1h-1zM933 399h1v1h-1zM955 399h1v1h-1zM977 399h1v1h-1zM999 399h1v1h-1zM1021 399h1v1h-1zM1043 399h1v1h-1zM1065 399h1v1h-1zM1087 399h1v1h-1zM1109 399h1v1h-1zM1131 399h1v1h-1zM1153 399h1v1h-1zM1175 399h1v1h-1zM1196 399h1v1h-1zM1218 399h1v1h-1zM1240 399h1v1h-1zM1262 399h1v1h-1zM1284 399h1v1h-1zM1306 399h1v1h-1zM362 420h1v1h-1zM384 420h1v1h-1zM406 420h1v1h-1zM428 420h1v1h-1zM450 420h1v1h-1zM472 420h1v1h-1zM494 420h1v1h-1zM516 420h1v1h-1zM538 420h1v1h-1zM560 420h1v1h-1zM582 420h1v1h-1zM604 420h1v1h-1zM626 420h1v1h-1zM647 420h1v1h-1zM669 420h1v1h-1zM691 420h1v1h-1zM713 420h1v1h-1zM735 420h1v1h-1zM757 420h1v1h-1zM779 420h1v1h-1zM801 420h1v1h-1zM823 420h1v1h-1zM845 420h1v1h-1zM867 420h1v1h-1zM889 420h1v1h-1zM911 420h1v1h-1zM933 420h1v1h-1zM955 420h1v1h-1zM977 420h1v1h-1zM999 420h1v1h-1zM1021 420h1v1h-1zM1043 420h1v1h-1zM1065 420h1v1h-1zM1087 420h1v1h-1zM1109 420h1v1h-1zM1131 420h1v1h-1zM1153 420h1v1h-1zM1175 420h1v1h-1zM1196 420h1v1h-1zM1218 420h1v1h-1zM1240 420h1v1h-1zM1262 420h1v1h-1zM1284 420h1v1h-1zM1306 420h1v1h-1zM362 442h1v1h-1zM384 442h1v1h-1zM406 442h1v1h-1zM428 442h1v1h-1zM450 442h1v1h-1zM472 442h1v1h-1zM494 442h1v1h-1zM516 442h1v1h-1zM538 442h1v1h-1zM560 442h1v1h-1zM582 442h1v1h-1zM604 442h1v1h-1zM626 442h1v1h-1zM647 442h1v1h-1zM669 442h1v1h-1zM691 442h1v1h-1zM713 442h1v1h-1zM735 442h1v1h-1zM757 442h1v1h-1zM779 442h1v1h-1zM801 442h1v1h-1zM823 442h1v1h-1zM845 442h1v1h-1zM867 442h1v1h-1zM889 442h1v1h-1zM911 442h1v1h-1zM933 442h1v1h-1zM955 442h1v1h-1zM977 442h1v1h-1zM999 442h1v1h-1zM1021 442h1v1h-1zM1043 442h1v1h-1zM1065 442h1v1h-1zM1087 442h1v1h-1zM1109 442h1v1h-1zM1131 442h1v1h-1zM1153 442h1v1h-1zM1175 442h1v1h-1zM1196 442h1v1h-1zM1218 442h1v1h-1zM1240 442h1v1h-1zM1262 442h1v1h-1zM1284 442h1v1h-1zM1306 442h1v1h-1zM362 464h1v1h-1zM384 464h1v1h-1zM406 464h1v1h-1zM428 464h1v1h-1zM450 464h1v1h-1zM472 464h1v1h-1zM494 464h1v1h-1zM516 464h1v1h-1zM538 464h1v1h-1zM560 464h1v1h-1zM582 464h1v1h-1zM604 464h1v1h-1zM626 464h1v1h-1zM647 464h1v1h-1zM669 464h1v1h-1zM691 464h1v1h-1zM713 464h1v1h-1zM735 464h1v1h-1zM757 464h1v1h-1zM779 464h1v1h-1zM801 464h1v1h-1zM823 464h1v1h-1zM845 464h1v1h-1zM867 464h1v1h-1zM889 464h1v1h-1zM911 464h1v1h-1zM933 464h1v1h-1zM955 464h1v1h-1zM977 464h1v1h-1zM999 464h1v1h-1zM1021 464h1v1h-1zM1043 464h1v1h-1zM1065 464h1v1h-1zM1087 464h1v1h-1zM1109 464h1v1h-1zM1131 464h1v1h-1zM1153 464h1v1h-1zM1175 464h1v1h-1zM1196 464h1v1h-1zM1218 464h1v1h-1zM1240 464h1v1h-1zM1262 464h1v1h-1zM1284 464h1v1h-1zM1306 464h1v1h-1zM362 486h1v1h-1zM384 486h1v1h-1zM406 486h1v1h-1zM428 486h1v1h-1zM450 486h1v1h-1zM472 486h1v1h-1zM494 486h1v1h-1zM516 486h1v1h-1zM538 486h1v1h-1zM560 486h1v1h-1zM582 486h1v1h-1zM604 486h1v1h-1zM626 486h1v1h-1zM647 486h1v1h-1zM669 486h1v1h-1zM691 486h1v1h-1zM713 486h1v1h-1zM735 486h1v1h-1zM757 486h1v1h-1zM779 486h1v1h-1zM801 486h1v1h-1zM823 486h1v1h-1zM845 486h1v1h-1zM867 486h1v1h-1zM889 486h1v1h-1zM911 486h1v1h-1zM933 486h1v1h-1zM955 486h1v1h-1zM977 486h1v1h-1zM999 486h1v1h-1zM1021 486h1v1h-1zM1043 486h1v1h-1zM1065 486h1v1h-1zM1087 486h1v1h-1zM1109 486h1v1h-1zM1131 486h1v1h-1zM1153 486h1v1h-1zM1175 486h1v1h-1zM1196 486h1v1h-1zM1218 486h1v1h-1zM1240 486h1v1h-1zM1262 486h1v1h-1zM1284 486h1v1h-1zM1306 486h1v1h-1zM362 508h1v1h-1zM384 508h1v1h-1zM406 508h1v1h-1zM428 508h1v1h-1zM450 508h1v1h-1zM472 508h1v1h-1zM494 508h1v1h-1zM516 508h1v1h-1zM538 508h1v1h-1zM560 508h1v1h-1zM582 508h1v1h-1zM604 508h1v1h-1zM626 508h1v1h-1zM647 508h1v1h-1zM669 508h1v1h-1zM691 508h1v1h-1zM713 508h1v1h-1zM735 508h1v1h-1zM757 508h1v1h-1zM779 508h1v1h-1zM801 508h1v1h-1zM823 508h1v1h-1zM845 508h1v1h-1zM867 508h1v1h-1zM889 508h1v1h-1zM911 508h1v1h-1zM933 508h1v1h-1zM955 508h1v1h-1zM977 508h1v1h-1zM999 508h1v1h-1zM1021 508h1v1h-1zM1043 508h1v1h-1zM1065 508h1v1h-1zM1087 508h1v1h-1zM1109 508h1v1h-1zM1131 508h1v1h-1zM1153 508h1v1h-1zM1175 508h1v1h-1zM1196 508h1v1h-1zM1218 508h1v1h-1zM1240 508h1v1h-1zM1262 508h1v1h-1zM1284 508h1v1h-1zM1306 508h1v1h-1zM362 530h1v1h-1zM384 530h1v1h-1zM406 530h1v1h-1zM428 530h1v1h-1zM450 530h1v1h-1zM472 530h1v1h-1zM494 530h1v1h-1zM516 530h1v1h-1zM538 530h1v1h-1zM560 530h1v1h-1zM582 530h1v1h-1zM604 530h1v1h-1zM626 530h1v1h-1zM647 530h1v1h-1zM669 530h1v1h-1zM691 530h1v1h-1zM713 530h1v1h-1zM735 530h1v1h-1zM757 530h1v1h-1zM779 530h1v1h-1zM801 530h1v1h-1zM823 530h1v1h-1zM845 530h1v1h-1zM867 530h1v1h-1zM889 530h1v1h-1zM911 530h1v1h-1zM933 530h1v1h-1zM955 530h1v1h-1zM977 530h1v1h-1zM999 530h1v1h-1zM1021 530h1v1h-1zM1043 530h1v1h-1zM1065 530h1v1h-1zM1087 530h1v1h-1zM1109 530h1v1h-1zM1131 530h1v1h-1zM1153 530h1v1h-1zM1175 530h1v1h-1zM1196 530h1v1h-1zM1218 530h1v1h-1zM1240 530h1v1h-1zM1262 530h1v1h-1zM1284 530h1v1h-1zM1306 530h1v1h-1zM362 552h1v1h-1zM384 552h1v1h-1zM406 552h1v1h-1zM428 552h1v1h-1zM450 552h1v1h-1zM472 552h1v1h-1zM494 552h1v1h-1zM516 552h1v1h-1zM538 552h1v1h-1zM560 552h1v1h-1zM582 552h1v1h-1zM604 552h1v1h-1zM626 552h1v1h-1zM647 552h1v1h-1zM669 552h1v1h-1zM691 552h1v1h-1zM713 552h1v1h-1zM735 552h1v1h-1zM757 552h1v1h-1zM779 552h1v1h-1zM801 552h1v1h-1zM823 552h1v1h-1zM845 552h1v1h-1zM867 552h1v1h-1zM889 552h1v1h-1zM911 552h1v1h-1zM933 552h1v1h-1zM955 552h1v1h-1zM977 552h1v1h-1zM999 552h1v1h-1zM1021 552h1v1h-1zM1043 552h1v1h-1zM1065 552h1v1h-1zM1087 552h1v1h-1zM1109 552h1v1h-1zM1131 552h1v1h-1zM1153 552h1v1h-1zM1175 552h1v1h-1zM1196 552h1v1h-1zM1218 552h1v1h-1zM1240 552h1v1h-1zM1262 552h1v1h-1zM1284 552h1v1h-1zM1306 552h1v1h-1zM362 574h1v1h-1zM384 574h1v1h-1zM406 574h1v1h-1zM428 574h1v1h-1zM450 574h1v1h-1zM472 574h1v1h-1zM494 574h1v1h-1zM516 574h1v1h-1zM538 574h1v1h-1zM560 574h1v1h-1zM582 574h1v1h-1zM604 574h1v1h-1zM626 574h1v1h-1zM647 574h1v1h-1zM669 574h1v1h-1zM691 574h1v1h-1zM713 574h1v1h-1zM735 574h1v1h-1zM757 574h1v1h-1zM779 574h1v1h-1zM801 574h1v1h-1zM823 574h1v1h-1zM845 574h1v1h-1zM867 574h1v1h-1zM889 574h1v1h-1zM911 574h1v1h-1zM933 574h1v1h-1zM955 574h1v1h-1zM977 574h1v1h-1zM999 574h1v1h-1zM1021 574h1v1h-1zM1043 574h1v1h-1zM1065 574h1v1h-1zM1087 574h1v1h-1zM1109 574h1v1h-1zM1131 574h1v1h-1zM1153 574h1v1h-1zM1175 574h1v1h-1zM1196 574h1v1h-1zM1218 574h1v1h-1zM1240 574h1v1h-1zM1262 574h1v1h-1zM1284 574h1v1h-1zM1306 574h1v1h-1zM362 596h1v1h-1zM384 596h1v1h-1zM406 596h1v1h-1zM428 596h1v1h-1zM450 596h1v1h-1zM472 596h1v1h-1zM494 596h1v1h-1zM516 596h1v1h-1zM538 596h1v1h-1zM560 596h1v1h-1zM582 596h1v1h-1zM604 596h1v1h-1zM626 596h1v1h-1zM647 596h1v1h-1zM669 596h1v1h-1zM691 596h1v1h-1zM713 596h1v1h-1zM735 596h1v1h-1zM757 596h1v1h-1zM779 596h1v1h-1zM801 596h1v1h-1zM823 596h1v1h-1zM845 596h1v1h-1zM867 596h1v1h-1zM889 596h1v1h-1zM911 596h1v1h-1zM933 596h1v1h-1zM955 596h1v1h-1zM977 596h1v1h-1zM999 596h1v1h-1zM1021 596h1v1h-1zM1043 596h1v1h-1zM1065 596h1v1h-1zM1087 596h1v1h-1zM1109 596h1v1h-1zM1131 596h1v1h-1zM1153 596h1v1h-1zM1175 596h1v1h-1zM1196 596h1v1h-1zM1218 596h1v1h-1zM1240 596h1v1h-1zM1262 596h1v1h-1zM1284 596h1v1h-1zM1306 596h1v1h-1zM362 618h1v1h-1zM384 618h1v1h-1zM406 618h1v1h-1zM428 618h1v1h-1zM450 618h1v1h-1zM472 618h1v1h-1zM494 618h1v1h-1zM516 618h1v1h-1zM538 618h1v1h-1zM560 618h1v1h-1zM582 618h1v1h-1zM604 618h1v1h-1zM626 618h1v1h-1zM647 618h1v1h-1zM669 618h1v1h-1zM691 618h1v1h-1zM713 618h1v1h-1zM735 618h1v1h-1zM757 618h1v1h-1zM779 618h1v1h-1zM801 618h1v1h-1zM823 618h1v1h-1zM845 618h1v1h-1zM867 618h1v1h-1zM889 618h1v1h-1zM911 618h1v1h-1zM933 618h1v1h-1zM955 618h1v1h-1zM977 618h1v1h-1zM999 618h1v1h-1zM1021 618h1v1h-1zM1043 618h1v1h-1zM1065 618h1v1h-1zM1087 618h1v1h-1zM1109 618h1v1h-1zM1131 618h1v1h-1zM1153 618h1v1h-1zM1175 618h1v1h-1zM1196 618h1v1h-1zM1218 618h1v1h-1zM1240 618h1v1h-1zM1262 618h1v1h-1zM1284 618h1v1h-1zM1306 618h1v1h-1zM362 640h1v1h-1zM384 640h1v1h-1zM406 640h1v1h-1zM428 640h1v1h-1zM450 640h1v1h-1zM472 640h1v1h-1zM494 640h1v1h-1zM516 640h1v1h-1zM538 640h1v1h-1zM560 640h1v1h-1zM582 640h1v1h-1zM604 640h1v1h-1zM626 640h1v1h-1zM647 640h1v1h-1zM669 640h1v1h-1zM691 640h1v1h-1zM713 640h1v1h-1zM735 640h1v1h-1zM757 640h1v1h-1zM779 640h1v1h-1zM801 640h1v1h-1zM823 640h1v1h-1zM845 640h1v1h-1zM867 640h1v1h-1zM889 640h1v1h-1zM911 640h1v1h-1zM933 640h1v1h-1zM955 640h1v1h-1zM977 640h1v1h-1zM999 640h1v1h-1zM1021 640h1v1h-1zM1043 640h1v1h-1zM1065 640h1v1h-1zM1087 640h1v1h-1zM1109 640h1v1h-1zM1131 640h1v1h-1zM1153 640h1v1h-1zM1175 640h1v1h-1zM1196 640h1v1h-1zM1218 640h1v1h-1zM1240 640h1v1h-1zM1262 640h1v1h-1zM1284 640h1v1h-1zM1306 640h1v1h-1zM362 662h1v1h-1zM384 662h1v1h-1zM406 662h1v1h-1zM428 662h1v1h-1zM450 662h1v1h-1zM472 662h1v1h-1zM494 662h1v1h-1zM516 662h1v1h-1zM538 662h1v1h-1zM560 662h1v1h-1zM582 662h1v1h-1zM604 662h1v1h-1zM626 662h1v1h-1zM647 662h1v1h-1zM669 662h1v1h-1zM691 662h1v1h-1zM713 662h1v1h-1zM735 662h1v1h-1zM757 662h1v1h-1zM779 662h1v1h-1zM801 662h1v1h-1zM823 662h1v1h-1zM845 662h1v1h-1zM867 662h1v1h-1zM889 662h1v1h-1zM911 662h1v1h-1zM933 662h1v1h-1zM955 662h1v1h-1zM977 662h1v1h-1zM999 662h1v1h-1zM1021 662h1v1h-1zM1043 662h1v1h-1zM1065 662h1v1h-1zM1087 662h1v1h-1zM1109 662h1v1h-1zM1131 662h1v1h-1zM1153 662h1v1h-1zM1175 662h1v1h-1zM1196 662h1v1h-1zM1218 662h1v1h-1zM1240 662h1v1h-1zM1262 662h1v1h-1zM1284 662h1v1h-1zM1306 662h1v1h-1zM362 684h1v1h-1zM384 684h1v1h-1zM406 684h1v1h-1zM428 684h1v1h-1zM450 684h1v1h-1zM472 684h1v1h-1zM494 684h1v1h-1zM516 684h1v1h-1zM538 684h1v1h-1zM560 684h1v1h-1zM582 684h1v1h-1zM604 684h1v1h-1zM626 684h1v1h-1zM647 684h1v1h-1zM669 684h1v1h-1zM691 684h1v1h-1zM713 684h1v1h-1zM735 684h1v1h-1zM757 684h1v1h-1zM779 684h1v1h-1zM801 684h1v1h-1zM823 684h1v1h-1zM845 684h1v1h-1zM867 684h1v1h-1zM889 684h1v1h-1zM911 684h1v1h-1zM933 684h1v1h-1zM955 684h1v1h-1zM977 684h1v1h-1zM999 684h1v1h-1zM1021 684h1v1h-1zM1043 684h1v1h-1zM1065 684h1v1h-1zM1087 684h1v1h-1zM1109 684h1v1h-1zM1131 684h1v1h-1zM1153 684h1v1h-1zM1175 684h1v1h-1zM1196 684h1v1h-1zM1218 684h1v1h-1zM1240 684h1v1h-1zM1262 684h1v1h-1zM1284 684h1v1h-1zM1306 684h1v1h-1zM362 706h1v1h-1zM384 706h1v1h-1zM406 706h1v1h-1zM428 706h1v1h-1zM450 706h1v1h-1zM472 706h1v1h-1zM494 706h1v1h-1zM516 706h1v1h-1zM538 706h1v1h-1zM560 706h1v1h-1zM582 706h1v1h-1zM604 706h1v1h-1zM626 706h1v1h-1zM647 706h1v1h-1zM669 706h1v1h-1zM691 706h1v1h-1zM713 706h1v1h-1zM735 706h1v1h-1zM757 706h1v1h-1zM779 706h1v1h-1zM801 706h1v1h-1zM823 706h1v1h-1zM845 706h1v1h-1zM867 706h1v1h-1zM889 706h1v1h-1zM911 706h1v1h-1zM933 706h1v1h-1zM955 706h1v1h-1zM977 706h1v1h-1zM999 706h1v1h-1zM1021 706h1v1h-1zM1043 706h1v1h-1zM1065 706h1v1h-1zM1087 706h1v1h-1zM1109 706h1v1h-1zM1131 706h1v1h-1zM1153 706h1v1h-1zM1175 706h1v1h-1zM1196 706h1v1h-1zM1218 706h1v1h-1zM1240 706h1v1h-1zM1262 706h1v1h-1zM1284 706h1v1h-1zM1306 706h1v1h-1zM362 728h1v1h-1zM384 728h1v1h-1zM406 728h1v1h-1zM428 728h1v1h-1zM450 728h1v1h-1zM472 728h1v1h-1zM494 728h1v1h-1zM516 728h1v1h-1zM538 728h1v1h-1zM560 728h1v1h-1zM582 728h1v1h-1zM604 728h1v1h-1zM626 728h1v1h-1zM647 728h1v1h-1zM669 728h1v1h-1zM691 728h1v1h-1zM713 728h1v1h-1zM735 728h1v1h-1zM757 728h1v1h-1zM779 728h1v1h-1zM801 728h1v1h-1zM823 728h1v1h-1zM845 728h1v1h-1zM867 728h1v1h-1zM889 728h1v1h-1zM911 728h1v1h-1zM933 728h1v1h-1zM955 728h1v1h-1zM977 728h1v1h-1zM999 728h1v1h-1zM1021 728h1v1h-1zM1043 728h1v1h-1zM1065 728h1v1h-1zM1087 728h1v1h-1zM1109 728h1v1h-1zM1131 728h1v1h-1zM1153 728h1v1h-1zM1175 728h1v1h-1zM1196 728h1v1h-1zM1218 728h1v1h-1zM1240 728h1v1h-1zM1262 728h1v1h-1zM1284 728h1v1h-1zM1306 728h1v1h-1zM362 750h1v1h-1zM384 750h1v1h-1zM406 750h1v1h-1zM428 750h1v1h-1zM450 750h1v1h-1zM472 750h1v1h-1zM494 750h1v1h-1zM516 750h1v1h-1zM538 750h1v1h-1zM560 750h1v1h-1zM582 750h1v1h-1zM604 750h1v1h-1zM626 750h1v1h-1zM647 750h1v1h-1zM669 750h1v1h-1zM691 750h1v1h-1zM713 750h1v1h-1zM735 750h1v1h-1zM757 750h1v1h-1zM779 750h1v1h-1zM801 750h1v1h-1zM823 750h1v1h-1zM845 750h1v1h-1zM867 750h1v1h-1zM889 750h1v1h-1zM911 750h1v1h-1zM933 750h1v1h-1zM955 750h1v1h-1zM977 750h1v1h-1zM999 750h1v1h-1zM1021 750h1v1h-1zM1043 750h1v1h-1zM1065 750h1v1h-1zM1087 750h1v1h-1zM1109 750h1v1h-1zM1131 750h1v1h-1zM1153 750h1v1h-1zM1175 750h1v1h-1zM1196 750h1v1h-1zM1218 750h1v1h-1zM1240 750h1v1h-1zM1262 750h1v1h-1zM1284 750h1v1h-1zM1306 750h1v1h-1zM362 772h1v1h-1zM384 772h1v1h-1zM406 772h1v1h-1zM428 772h1v1h-1zM450 772h1v1h-1zM472 772h1v1h-1zM494 772h1v1h-1zM516 772h1v1h-1zM538 772h1v1h-1zM560 772h1v1h-1zM582 772h1v1h-1zM604 772h1v1h-1zM626 772h1v1h-1zM647 772h1v1h-1zM669 772h1v1h-1zM691 772h1v1h-1zM713 772h1v1h-1zM735 772h1v1h-1zM757 772h1v1h-1zM779 772h1v1h-1zM801 772h1v1h-1zM823 772h1v1h-1zM845 772h1v1h-1zM867 772h1v1h-1zM889 772h1v1h-1zM911 772h1v1h-1zM933 772h1v1h-1zM955 772h1v1h-1zM977 772h1v1h-1zM999 772h1v1h-1zM1021 772h1v1h-1zM1043 772h1v1h-1zM1065 772h1v1h-1zM1087 772h1v1h-1zM1109 772h1v1h-1zM1131 772h1v1h-1zM1153 772h1v1h-1zM1175 772h1v1h-1zM1196 772h1v1h-1zM1218 772h1v1h-1zM1240 772h1v1h-1zM1262 772h1v1h-1zM1284 772h1v1h-1zM1306 772h1v1h-1zM362 794h1v1h-1zM384 794h1v1h-1zM406 794h1v1h-1zM428 794h1v1h-1zM450 794h1v1h-1zM472 794h1v1h-1zM494 794h1v1h-1zM516 794h1v1h-1zM538 794h1v1h-1zM560 794h1v1h-1zM582 794h1v1h-1zM604 794h1v1h-1zM626 794h1v1h-1zM647 794h1v1h-1zM669 794h1v1h-1zM691 794h1v1h-1zM713 794h1v1h-1zM735 794h1v1h-1zM757 794h1v1h-1zM779 794h1v1h-1zM801 794h1v1h-1zM823 794h1v1h-1zM845 794h1v1h-1zM867 794h1v1h-1zM889 794h1v1h-1zM911 794h1v1h-1zM933 794h1v1h-1zM955 794h1v1h-1zM977 794h1v1h-1zM999 794h1v1h-1zM1021 794h1v1h-1zM1043 794h1v1h-1zM1065 794h1v1h-1zM1087 794h1v1h-1zM1109 794h1v1h-1zM1131 794h1v1h-1zM1153 794h1v1h-1zM1175 794h1v1h-1zM1196 794h1v1h-1zM1218 794h1v1h-1zM1240 794h1v1h-1zM1262 794h1v1h-1zM1284 794h1v1h-1zM1306 794h1v1h-1zM362 816h1v1h-1zM384 816h1v1h-1zM406 816h1v1h-1zM428 816h1v1h-1zM450 816h1v1h-1zM472 816h1v1h-1zM494 816h1v1h-1zM516 816h1v1h-1zM538 816h1v1h-1zM560 816h1v1h-1zM582 816h1v1h-1zM604 816h1v1h-1zM626 816h1v1h-1zM647 816h1v1h-1zM669 816h1v1h-1zM691 816h1v1h-1zM713 816h1v1h-1zM735 816h1v1h-1zM757 816h1v1h-1zM779 816h1v1h-1zM801 816h1v1h-1zM823 816h1v1h-1zM845 816h1v1h-1zM867 816h1v1h-1zM889 816h1v1h-1zM911 816h1v1h-1zM933 816h1v1h-1zM955 816h1v1h-1zM977 816h1v1h-1zM999 816h1v1h-1zM1021 816h1v1h-1zM1043 816h1v1h-1zM1065 816h1v1h-1zM1087 816h1v1h-1zM1109 816h1v1h-1zM1131 816h1v1h-1zM1153 816h1v1h-1zM1175 816h1v1h-1zM1196 816h1v1h-1zM1218 816h1v1h-1zM1240 816h1v1h-1zM1262 816h1v1h-1zM1284 816h1v1h-1zM1306 816h1v1h-1zM362 838h1v1h-1zM384 838h1v1h-1zM406 838h1v1h-1zM428 838h1v1h-1zM450 838h1v1h-1zM472 838h1v1h-1zM494 838h1v1h-1zM516 838h1v1h-1zM538 838h1v1h-1zM560 838h1v1h-1zM582 838h1v1h-1zM604 838h1v1h-1zM626 838h1v1h-1zM647 838h1v1h-1zM669 838h1v1h-1zM691 838h1v1h-1zM713 838h1v1h-1zM735 838h1v1h-1zM757 838h1v1h-1zM779 838h1v1h-1zM801 838h1v1h-1zM823 838h1v1h-1zM845 838h1v1h-1zM867 838h1v1h-1zM889 838h1v1h-1zM911 838h1v1h-1zM933 838h1v1h-1zM955 838h1v1h-1zM977 838h1v1h-1zM999 838h1v1h-1zM1021 838h1v1h-1zM1043 838h1v1h-1zM1065 838h1v1h-1zM1087 838h1v1h-1zM1109 838h1v1h-1zM1131 838h1v1h-1zM1153 838h1v1h-1zM1175 838h1v1h-1zM1196 838h1v1h-1zM1218 838h1v1h-1zM1240 838h1v1h-1zM1262 838h1v1h-1zM1284 838h1v1h-1zM1306 838h1v1h-1zM362 860h1v1h-1zM384 860h1v1h-1zM406 860h1v1h-1zM428 860h1v1h-1zM450 860h1v1h-1zM472 860h1v1h-1zM494 860h1v1h-1zM516 860h1v1h-1zM538 860h1v1h-1zM560 860h1v1h-1zM582 860h1v1h-1zM604 860h1v1h-1zM626 860h1v1h-1zM647 860h1v1h-1zM669 860h1v1h-1zM691 860h1v1h-1zM713 860h1v1h-1zM735 860h1v1h-1zM757 860h1v1h-1zM779 860h1v1h-1zM801 860h1v1h-1zM823 860h1v1h-1zM845 860h1v1h-1zM867 860h1v1h-1zM889 860h1v1h-1zM911 860h1v1h-1zM933 860h1v1h-1zM955 860h1v1h-1zM977 860h1v1h-1zM999 860h1v1h-1zM1021 860h1v1h-1zM1043 860h1v1h-1zM1065 860h1v1h-1zM1087 860h1v1h-1zM1109 860h1v1h-1zM1131 860h1v1h-1zM1153 860h1v1h-1zM1175 860h1v1h-1zM1196 860h1v1h-1zM1218 860h1v1h-1zM1240 860h1v1h-1zM1262 860h1v1h-1zM1284 860h1v1h-1zM1306 860h1v1h-1z" fill="#000"/>
</svg><svg style="left:0;top:0" width="1920" height="862" viewBox="0 0 1920 862">
<path d="M365.5 92V104M375 92.3L369 98L375 103.7" fill="none" stroke="#3d3d3d" stroke-width="1.2"/>
<rect x="394.6" y="92.6" width="14.8" height="11.8" fill="#e9e9e8" stroke="#3d3d3d" stroke-width="1.2"/>
<path d="M394.6 101H409.4M398.4 101V104.4M405.6 101V104.4" stroke="#3d3d3d" stroke-width="1.2"/>
<path d="M1294.8 104.4H1284.6V92.6H1299.4V98.4M1284.6 101.4H1294M1288.4 101.4V104.4" fill="none" stroke="#3d3d3d" stroke-width="1.2"/>
<path d="M1294.9 102.6H1300M1297.45 100.1V105.1" stroke="#2ec27e" stroke-width="1.5"/>
<path d="M1323 92.3L1329.2 98L1323 103.7M1332.5 92V104" fill="none" stroke="#3d3d3d" stroke-width="1.2"/>

<!-- canvas scrollbar -->
<rect x="1335" y="345" width="3.2" height="263" rx="1.6" fill="#7c8081"/>
<!-- diagram -->
<g fill="none" stroke="#000" stroke-width="2">
<path d="M735 321V356"/>
<path d="M712.6 354.2L735 398.4V433"/>
<path d="M719.6 370.5L704 379"/>
</g>
<path d="M699 381.8L703.2 375.2L706.3 380.6Z" fill="#000" stroke="#000" stroke-width="1"/>
<rect x="734" y="312" width="2" height="9" fill="#ff0000"/>
<rect x="734" y="310" width="2" height="2" fill="#0000ff"/>
<rect x="734" y="433" width="2" height="8" fill="#ff0000"/>
<rect x="734" y="441" width="2" height="2" fill="#0000ff"/>
<rect x="637.5" y="355.5" width="44" height="47" fill="none" stroke="#222" stroke-width="1" stroke-dasharray="4 2"/>
</svg>
<div class="t" style="left:741.5px;top:325px;letter-spacing:0;font-family:'Liberation Mono',monospace;font-size:23.5px;line-height:26px;color:#000">1</div>
<div class="t" style="left:741.5px;top:413.5px;letter-spacing:0;font-family:'Liberation Mono',monospace;font-size:23.5px;line-height:26px;color:#000">2</div>
<div class="t" style="left:766px;top:345px;letter-spacing:0;font-family:'Liberation Mono',monospace;font-size:23.5px;line-height:26px;color:#000">Q</div>
<div class="t" style="left:645px;top:366px;letter-spacing:0;font-family:'Liberation Sans',sans-serif;font-size:23.5px;line-height:26px;color:#000">6A</div>
<div class="t b" style="left:825px;top:91px;color:#2e3436">1/1 -</div>


<!-- RIGHT DOCK 1 -->
<div class="dock" style="left:1345px;top:80px;width:573px;height:493px"></div>
<div class="t" style="left:1352px;top:86px">Selection properties</div>
<div class="a" style="left:1355px;top:116px;width:553px;height:447px;border:1px solid #cdc7c2;border-radius:0 0 4px 4px;background:#fff"></div>
<div class="a" style="left:1355px;top:116px;width:553px;height:37px;background:#d6d4d2;border:1px solid #cdc7c2;border-bottom:none"></div>
<div class="a" style="left:1545px;top:150px;width:173px;height:3px;background:#3584e4"></div>
<div class="t b" style="left:1406px;top:126px;color:#6f7374">Information</div>
<div class="t b" style="left:1614px;top:126px;color:#2e3436">texts</div>
<div class="t b" style="left:1789px;top:126px;color:#6f7374">General</div>
<div class="btn" style="left:1365px;top:162px;width:28px;height:28px"></div>
<div class="btn" style="left:1401px;top:162px;width:28px;height:28px"></div>
<div class="btn" style="left:1798px;top:162px;width:28px;height:28px"></div>
<div class="btn" style="left:1834px;top:162px;width:28px;height:28px"></div>
<div class="btn" style="left:1870px;top:162px;width:28px;height:28px"></div>
<div class="a" style="left:1365px;top:198px;width:533px;height:355px;border:1px solid #3584e4;background:#fff"></div>
<svg style="left:0;top:0" width="1920" height="862" viewBox="0 0 1920 862"><rect x="1366" y="199" width="517" height="24.5" fill="#fff"/><path d="M1366 223.5H1883M1882.5 199V223.5M1592.5 199V223.5" stroke="#d4d4d4"/><path d="M1375.5 224V437M1375.5 449V552" stroke="#c6c6c6"/><path d="M1395.5 224V417.5M1395.5 457V552" stroke="#c6c6c6"/><path d="M1396 236.5H1406" stroke="#c6c6c6"/><path d="M1396 262.5H1406" stroke="#c6c6c6"/><path d="M1396 289.5H1406" stroke="#c6c6c6"/><path d="M1396 314.5H1406" stroke="#c6c6c6"/><path d="M1396 339.5H1406" stroke="#c6c6c6"/><path d="M1396 364.5H1406" stroke="#c6c6c6"/><path d="M1396 391.5H1406" stroke="#c6c6c6"/><path d="M1396 417.5H1406" stroke="#c6c6c6"/><path d="M1396 469.5H1406" stroke="#c6c6c6"/><path d="M1396 494.5H1406" stroke="#c6c6c6"/><path d="M1396 519.5H1406" stroke="#c6c6c6"/><path d="M1396 544.5H1406" stroke="#c6c6c6"/></svg><div class="t b" style="left:1369px;top:203px;color:#8b8e8f">Property</div><div class="t b" style="left:1596px;top:203px;color:#8b8e8f">Value</div><div class="t" style="left:1409px;top:228px">Color</div><div class="t" style="left:1596px;top:228px">#000000</div><div class="t" style="left:1409px;top:255px">Frame</div><div class="a" style="left:1598px;top:254px;width:18px;height:18px;border:1px solid #cdc7c2;border-radius:3px;background:linear-gradient(#fff,#f3f2f1)"></div><div class="t" style="left:1409px;top:281px">Width</div><div class="t" style="left:1596px;top:281px">-1</div><div class="t" style="left:1409px;top:306px">Position X</div><div class="t" style="left:1596px;top:306px">10</div><div class="t" style="left:1409px;top:331px">Position Y</div><div class="t" style="left:1596px;top:331px">-20</div><div class="t" style="left:1409px;top:356px">Rotation</div><div class="t" style="left:1596px;top:356px">0</div><div class="t" style="left:1409px;top:383px">Maintain visual rotation</div><div class="a" style="left:1598px;top:382px;width:18px;height:18px;border-radius:3px;background:#3584e4"></div><div class="t" style="left:1409px;top:409px">Alignment</div><div class="t" style="left:1596px;top:409px">Edit</div><div class="t" style="left:1409px;top:461px">Source of text</div><div class="t" style="left:1596px;top:461px">Composite text</div><div class="t dis" style="left:1409px;top:486px">Text</div><div class="t dis" style="left:1596px;top:486px">6A</div><div class="t dis" style="left:1409px;top:511px">Information</div><div class="t" style="left:1409px;top:536px">Composite text</div><div class="t" style="left:1596px;top:536px">6A</div><div class="a" style="left:1386px;top:430px;width:497px;height:27px;background:#3584e4"></div><div class="t" style="left:1411px;top:435px;color:#fff">6A</div><svg style="left:0;top:0" width="1920" height="862" viewBox="0 0 1920 862"><path d="M1371 440H1381L1376 445.3Z" fill="#3b4042"/><path d="M1381.5 443.5H1386" stroke="#c6c6c6"/><path d="M1393 447.8L1397 438.2L1401.2 447.8M1394.6 444.2H1399.6" fill="none" stroke="#3d4a57" stroke-width="0.9"/><rect x="1408.5" y="430.5" width="183.5" height="26" fill="none" stroke="#e8dcc8" stroke-width="1" stroke-dasharray="1 1"/><rect x="1893" y="277" width="3" height="131" rx="1.5" fill="#7e8283"/><g transform="translate(1373,170)" fill="none" stroke="#3d3d3d"><path d="M0.5 0.5H9.5L11.5 2.5V11.5H0.5Z M3.5 0.5V4.5H8.5V0.5 M2.5 11.5V7.5H9.5V11.5"/><rect x="6.5" y="0.5" width="2" height="4" fill="#3d3d3d" stroke="none"/></g><g transform="translate(1409,170)"><path d="M0 0H5.2L7 2.2H11.8V4.1H4.6L3.2 5.5H0Z" fill="#3d3d3d"/><path d="M0.5 4V11.5H11.5V2.5" fill="none" stroke="#3d3d3d"/></g><g fill="none" stroke="#4a4a4a"><path d="M1804.5 170.5H1819M1806 169V183M1818 169V178.2M1804.5 181.5H1814.2" stroke-width="1"/><path d="M1808.4 173H1815.6" stroke-width="1.3"/><path d="M1812.2 173V179.7" stroke-width="1.9"/><path d="M1814.6 180.8H1818.6M1816.6 178.8V182.8" stroke-width="1"/></g><rect x="1842.8" y="170.8" width="10.4" height="10.4" fill="none" stroke="#3d3d3d" stroke-width="1.2"/><circle cx="1845.9" cy="173.9" r="1.8" fill="#3d3d3d"/><rect x="1849.4" y="172.4" width="2.5" height="3.1" fill="#3d3d3d"/><rect x="1845" y="177.4" width="1.9" height="2.5" fill="#3d3d3d"/><path d="M1849 179.9L1850.45 177.5L1851.9 179.9Z" fill="#3d3d3d"/><path d="M1878.3 176.5H1889.2" stroke="#3d3d3d" stroke-width="1.1"/></svg>

<!-- RIGHT DOCK 2 -->
<div class="dock" style="left:1345px;top:576px;width:573px;height:300px"></div>
<div class="t" style="left:1352px;top:582px">Auto numbering selection</div>
<div class="t" style="left:1354px;top:621px">Conductor</div>
<div class="t" style="left:1354px;top:664px">Element</div>
<div class="t" style="left:1354px;top:707px">Folio</div>
<div class="combo" style="left:1636px;top:612px;width:272px;height:35px"></div>
<div class="combo" style="left:1636px;top:655px;width:272px;height:35px"></div>
<div class="combo" style="left:1636px;top:698px;width:272px;height:35px"></div>
<div class="btn" style="left:1636px;top:741px;width:272px;height:34px"></div>
<div class="t" style="left:1749px;top:750px">Configure</div>
<svg style="left:0;top:0" width="1920" height="862" viewBox="0 0 1920 862"><!-- dock float/close icons --><g fill="none" stroke="#868b8c" stroke-width="1.8"><rect x="308.7" y="88.0" width="7.4" height="6.8"/><rect x="306.1" y="91.3" width="6.8" height="6.6"/><rect x="1873.7" y="88.4" width="7.4" height="6.8"/><rect x="1871.1" y="91.7" width="6.8" height="6.6"/><rect x="1873.7" y="583.9" width="7.4" height="6.8"/><rect x="1871.1" y="587.2" width="6.8" height="6.6"/></g>
<g fill="none" stroke="#868b8c" stroke-width="1.8">

<path d="M330 88.8L338.3 97.1M338.3 88.8L330 97.1" stroke-width="1.5"/>

<path d="M1894.8 88.8L1903.1 97.1M1903.1 88.8L1894.8 97.1" stroke-width="1.5"/>

<path d="M1894.8 584.3L1903.1 592.6M1903.1 584.3L1894.8 592.6" stroke-width="1.5"/>
</g><path d="M1601.5 390.8L1606.8 394.2L1612 387.6" fill="none" stroke="#fff" stroke-width="2.3"/><path d="M1884.6 626.4H1895.4L1890 631.8Z" fill="#3b4042"/><path d="M1884.6 669.4H1895.4L1890 674.8Z" fill="#3b4042"/><path d="M1884.6 712.4H1895.4L1890 717.8Z" fill="#3b4042"/><g fill="none" stroke="#3b4042" stroke-width="1"><path d="M1731 753.5H1743M1731 761.5H1743"/><circle cx="1739" cy="753.5" r="1.6" fill="#3b4042"/><circle cx="1734" cy="761.5" r="1.6" fill="#faf9f8"/></g></svg>
</body></html>
